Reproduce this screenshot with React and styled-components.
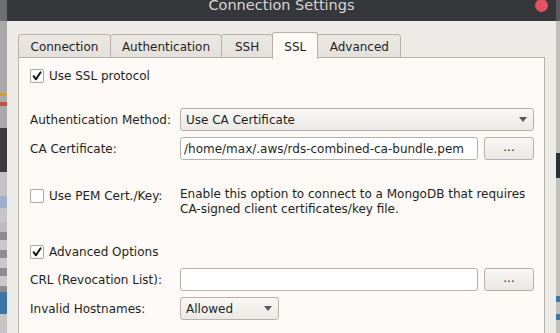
import React from "react";
import styled, { createGlobalStyle } from "styled-components";

const GlobalStyle = createGlobalStyle`
  html, body {
    margin: 0;
    padding: 0;
    width: 560px;
    height: 333px;
    overflow: hidden;
    background: #b4b4b4;
  }
  * { box-sizing: border-box; }
`;

const Desktop = styled.div`
  display: flex;
  width: 560px;
  height: 333px;
  overflow: hidden;
  font-family: "DejaVu Sans", "Liberation Sans", sans-serif;
  font-size: 12px;
  color: #1f1f1f;
`;

const Strip = styled.div`
  display: flex;
  flex-direction: column;
  width: ${(p) => p.$w}px;
  flex-shrink: 0;
`;

const Segment = styled.div`
  height: ${(p) => p.$h}px;
  background: ${(p) => p.$c};
  flex-shrink: 0;
`;

const Dialog = styled.div`
  flex: 1;
  display: flex;
  flex-direction: column;
  background: #edebe7;
  min-width: 0;
`;

const TitleBar = styled.div`
  height: 21px;
  background: #36373b;
  display: grid;
  grid-template-columns: 1fr auto 1fr;
  align-items: start;
  flex-shrink: 0;
`;

const Title = styled.div`
  grid-column: 2;
  color: #d6d6d6;
  font-size: 14.5px;
  line-height: 17px;
  margin-top: -3px;
  white-space: nowrap;
`;

const CloseDot = styled.div`
  grid-column: 3;
  justify-self: end;
  width: 13px;
  height: 13px;
  border-radius: 50%;
  background: #e5515d;
  margin-top: -1px;
  margin-right: 8px;
`;

const Body = styled.div`
  flex: 1;
  padding: 11px 11px 0 11px;
  display: flex;
  flex-direction: column;
`;

const TabBar = styled.div`
  display: flex;
  align-items: flex-end;
  height: 26px;
  position: relative;
  z-index: 1;
`;

const Tab = styled.div`
  height: ${(p) => (p.$active ? 27 : 24)}px;
  padding: ${(p) => (p.$active ? 1 : 2)}px ${(p) => p.$pad}px 0;
  margin-left: -1px;
  margin-bottom: ${(p) => (p.$active ? -1 : 0)}px;
  border: 1px solid #b6b1ab;
  border-bottom: ${(p) => (p.$active ? "none" : "1px solid #b6b1ab")};
  border-radius: 3px 3px 0 0;
  background: ${(p) =>
    p.$active ? "#fcf9f6" : "linear-gradient(#ebe8e4, #e4e1dd)"};
  display: flex;
  align-items: center;
  white-space: nowrap;
  &:first-child {
    margin-left: 0;
  }
`;

const Panel = styled.div`
  flex: 1;
  margin-top: -1px;
  background: #fcf9f6;
  border: 1px solid #b6b1ab;
  border-bottom: none;
  padding: 10px 10px 0 11px;
  display: flex;
  flex-direction: column;
`;

const CheckRow = styled.div`
  display: flex;
  align-items: center;
  gap: 5px;
  height: 15px;
  margin-top: ${(p) => p.$mt || 0}px;
`;

const Box = styled.div`
  width: 14px;
  height: 14px;
  border: 1px solid #aaa5a0;
  border-radius: 2px;
  background: #ffffff;
  display: flex;
  align-items: center;
  justify-content: center;
  flex-shrink: 0;
`;

const FieldRow = styled.div`
  display: grid;
  grid-template-columns: 150px 1fr;
  align-items: center;
  height: 23px;
  margin-top: ${(p) => p.$mt || 0}px;
`;

const Label = styled.div`
  white-space: nowrap;
`;

const Combo = styled.div`
  height: 23px;
  width: ${(p) => (p.$w ? `${p.$w}px` : "auto")};
  border: 1px solid #b6b1ab;
  border-radius: 3px;
  background: linear-gradient(#f8f7f5, #ebe9e6);
  display: flex;
  align-items: center;
  justify-content: space-between;
  padding: 0 6px 0 5px;
`;

const Arrow = styled.div`
  width: 0;
  height: 0;
  border-left: 4px solid transparent;
  border-right: 4px solid transparent;
  border-top: 5px solid #575757;
`;

const FileField = styled.div`
  display: flex;
  gap: 6px;
  align-items: center;
`;

const Input = styled.div`
  flex: 1;
  height: 23px;
  border: 1px solid #b6b1ab;
  border-radius: 3px;
  background: #ffffff;
  display: flex;
  align-items: center;
  padding-left: 3px;
  white-space: nowrap;
  overflow: hidden;
`;

const Button = styled.div`
  width: 50px;
  height: 23px;
  border: 1px solid #b6b1ab;
  border-radius: 3px;
  background: linear-gradient(#f8f7f6, #e9e7e4);
  display: flex;
  align-items: center;
  justify-content: center;
  padding-bottom: 3px;
`;

const PemRow = styled.div`
  display: grid;
  grid-template-columns: 150px 1fr;
  margin-top: ${(p) => p.$mt || 0}px;
`;

const PemCheck = styled.div`
  display: flex;
  align-items: flex-start;
  gap: 5px;
  padding-top: 2px;
  line-height: 15px;
`;

const Description = styled.div`
  line-height: 15px;
`;

const Check = () => (
  <svg width="10" height="10" viewBox="0 0 10 10">
    <path
      d="M1.6 5.2 L4 8.3 L8.6 1.2"
      fill="none"
      stroke="#111"
      strokeWidth="1.9"
      strokeLinecap="round"
      strokeLinejoin="round"
    />
  </svg>
);

const CheckBox = ({ checked }) => <Box>{checked && <Check />}</Box>;

const leftSegments = [
  [21, "#6e6f71"],
  [72, "#a9a9a9"],
  [3, "#d49f3a"],
  [6, "#a9a9a9"],
  [4, "#c8503f"],
  [22, "#a9a9a9"],
  [44, "#3b3b3d"],
  [24, "#c3c3c3"],
  [12, "#9fb0cf"],
  [14, "#c6c6c6"],
  [10, "#bdbdbd"],
  [8, "#8d8d8d"],
  [10, "#c9c9c9"],
  [8, "#8d8d8d"],
  [10, "#c9c9c9"],
  [8, "#8d8d8d"],
  [10, "#c9c9c9"],
  [6, "#8d8d8d"],
  [22, "#3d76a6"],
  [20, "#c6c6c6"],
];

const rightSegments = [
  [21, "#5a5a5c"],
  [132, "#c2c0bd"],
  [25, "#2d2e32"],
  [118, "#c2c0bd"],
  [6, "#3d76a6"],
  [12, "#c2c0bd"],
  [6, "#3d76a6"],
  [20, "#c2c0bd"],
];

const tabs = [
  ["Connection", 11.5],
  ["Authentication", 11],
  ["SSH", 13],
  ["SSL", 11],
  ["Advanced", 11.5],
];

export default function App() {
  return (
    <>
      <GlobalStyle />
      <Desktop>
        <Strip $w={7}>
          {leftSegments.map(([h, c], i) => (
            <Segment key={i} $h={h} $c={c} />
          ))}
        </Strip>
        <Dialog>
          <TitleBar>
            <Title>Connection Settings</Title>
            <CloseDot />
          </TitleBar>
          <Body>
            <TabBar>
              {tabs.map(([name, pad]) => (
                <Tab key={name} $pad={pad} $active={name === "SSL"}>
                  {name}
                </Tab>
              ))}
            </TabBar>
            <Panel>
              <CheckRow $mt={0}>
                <CheckBox checked />
                Use SSL protocol
              </CheckRow>

              <FieldRow $mt={25}>
                <Label>Authentication Method:</Label>
                <Combo>
                  Use CA Certificate
                  <Arrow />
                </Combo>
              </FieldRow>

              <FieldRow $mt={6}>
                <Label>CA Certificate:</Label>
                <FileField>
                  <Input>/home/max/.aws/rds-combined-ca-bundle.pem</Input>
                  <Button>...</Button>
                </FileField>
              </FieldRow>

              <PemRow $mt={27}>
                <PemCheck>
                  <CheckBox />
                  Use PEM Cert./Key:
                </PemCheck>
                <Description>
                  Enable this option to connect to a MongoDB that requires
                  <br />
                  CA-signed client certificates/key file.
                </Description>
              </PemRow>

              <CheckRow $mt={27}>
                <CheckBox checked />
                Advanced Options
              </CheckRow>

              <FieldRow $mt={9}>
                <Label>CRL (Revocation List):</Label>
                <FileField>
                  <Input />
                  <Button>...</Button>
                </FileField>
              </FieldRow>

              <FieldRow $mt={6}>
                <Label>Invalid Hostnames:</Label>
                <div>
                  <Combo $w={99}>
                    Allowed
                    <Arrow />
                  </Combo>
                </div>
              </FieldRow>
            </Panel>
          </Body>
        </Dialog>
        <Strip $w={4}>
          {rightSegments.map(([h, c], i) => (
            <Segment key={i} $h={h} $c={c} />
          ))}
        </Strip>
      </Desktop>
    </>
  );
}
